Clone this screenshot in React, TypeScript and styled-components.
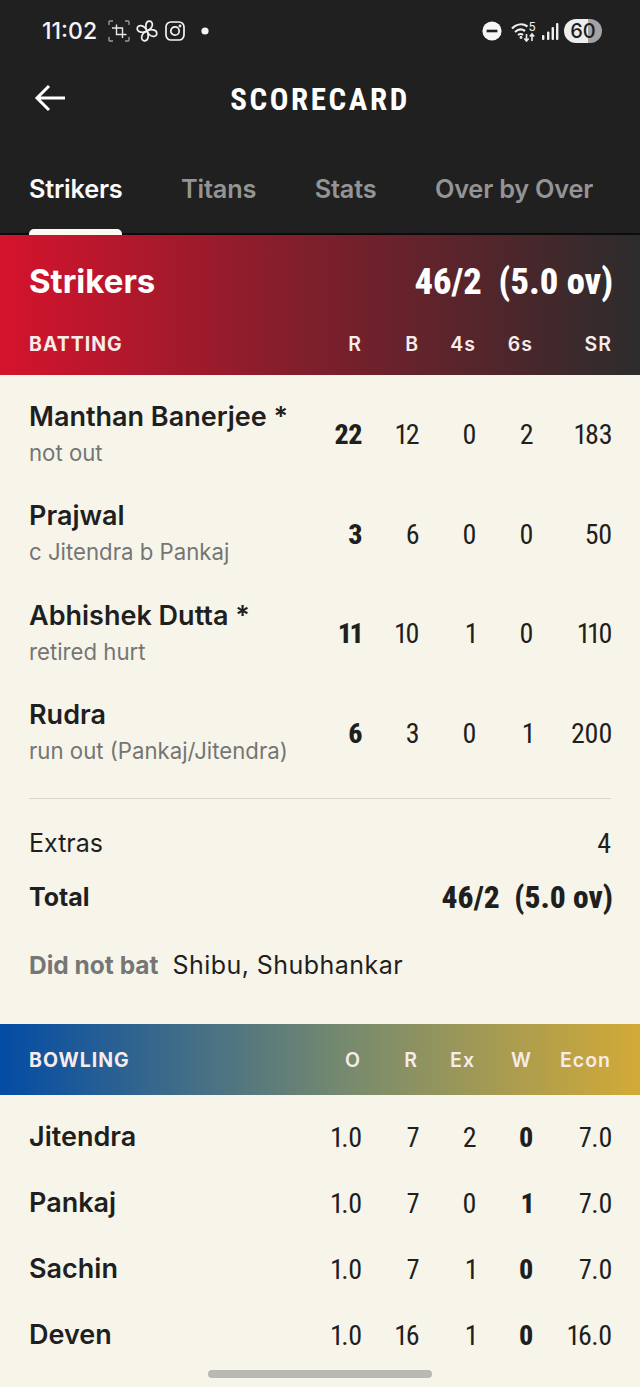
import React from "react";
import styled, { createGlobalStyle } from "styled-components";

const GlobalStyle = createGlobalStyle`
  html, body {
    margin: 0;
    padding: 0;
    background: #f7f5ea;
  }
  * { box-sizing: border-box; }
`;

const SANS = `Inter, Roboto, "Liberation Sans", sans-serif`;
const NARROW = `Roboto, "Liberation Sans", sans-serif`;

const batting = [
  { name: "Manthan Banerjee *", how: "not out", r: "22", b: "12", f: "0", s: "2", sr: "183" },
  { name: "Prajwal", how: "c Jitendra b Pankaj", r: "3", b: "6", f: "0", s: "0", sr: "50" },
  { name: "Abhishek Dutta *", how: "retired hurt", r: "11", b: "10", f: "1", s: "0", sr: "110" },
  { name: "Rudra", how: "run out (Pankaj/Jitendra)", r: "6", b: "3", f: "0", s: "1", sr: "200" },
];

const bowling = [
  { name: "Jitendra", o: "1.0", r: "7", ex: "2", w: "0", econ: "7.0" },
  { name: "Pankaj", o: "1.0", r: "7", ex: "0", w: "1", econ: "7.0" },
  { name: "Sachin", o: "1.0", r: "7", ex: "1", w: "0", econ: "7.0" },
  { name: "Deven", o: "1.0", r: "16", ex: "1", w: "0", econ: "16.0" },
];

const Page = styled.div`
  position: relative;
  width: 640px;
  height: 1387px;
  overflow: hidden;
  background: #f7f5ea;
  font-family: ${SANS};
  color: #1f1f1f;
`;

const Top = styled.div`
  background: #202020;
  height: 235px;
  border-bottom: 2px solid #0c0c0c;
  display: flex;
  flex-direction: column;
`;

const StatusBar = styled.div`
  height: 62px;
  padding: 0 38px 0 42px;
  display: flex;
  align-items: center;
  justify-content: space-between;
  color: #f4f4f4;
`;

const StatusGroup = styled.div`
  display: flex;
  align-items: center;
`;

const Clock = styled.span`
  font-size: 23px;
  font-weight: 500;
  margin-right: 10px;
`;

const Battery = styled.span`
  width: 38px;
  height: 24px;
  margin-left: 5px;
  border-radius: 12px;
  background: linear-gradient(90deg, #ededed 0 62%, #a3a3a3 62% 100%);
  color: #1c1c1c;
  font-size: 20px;
  font-weight: 500;
  display: flex;
  align-items: center;
  justify-content: center;
`;

const Header = styled.div`
  height: 72px;
  padding-left: 33px;
  display: flex;
  align-items: center;
`;

const Title = styled.h1`
  flex: 1;
  margin: 0 0 0 -67px;
  padding-top: 2px;
  text-align: center;
  color: #fff;
  font-family: ${NARROW};
  font-size: 31px;
  font-weight: 700;
  font-stretch: 75%;
  letter-spacing: 2.6px;
`;

const BackIcon = styled.svg`
  width: 34px;
  height: 34px;
  flex: none;
`;

const Tabs = styled.div`
  flex: 1;
  padding: 0 29px;
  display: flex;
  gap: 58.6px;
`;

const Tab = styled.div<{ $active?: boolean }>`
  position: relative;
  padding-top: 39px;
  font-size: 25.3px;
  font-weight: 600;
  letter-spacing: -0.2px;
  white-space: nowrap;
  color: ${(p) => (p.$active ? "#fbfbf8" : "#949494")};

  &::after {
    content: "";
    display: ${(p) => (p.$active ? "block" : "none")};
    position: absolute;
    left: 0;
    right: 0;
    bottom: -2px;
    height: 6px;
    border-radius: 5px 5px 0 0;
    background: #fbf9f2;
  }
`;

const TeamBand = styled.div`
  height: 140px;
  padding: 0 29px;
  background: linear-gradient(90deg, #d5132d 0%, #7c1f2b 50%, #2c2c2c 100%);
  color: #fff;
  display: flex;
  flex-direction: column;
`;

const TeamLine = styled.div`
  height: 92px;
  display: flex;
  justify-content: space-between;
  align-items: center;
`;

const TeamName = styled.div`
  font-size: 33px;
  font-weight: 700;
`;

const ScoreBig = styled.div`
  margin-right: -2px;
  font-family: ${NARROW};
  font-size: 36.5px;
  font-weight: 800;
  font-stretch: 75%;
  white-space: pre;
`;

const StatGrid = styled.div`
  display: grid;
  grid-template-columns: 1fr 56px 57px 57px 57px 79px;
  align-items: center;
`;

const BandLabels = styled(StatGrid)`
  margin-top: 5px;
`;

const LabelCell = styled.span`
  margin-right: -1px;
  font-size: 19.5px;
  font-weight: 600;
  letter-spacing: 1px;
  text-align: right;
  color: #f7ecea;

  &:first-child {
    text-align: left;
    font-weight: 700;
  }
`;

const Num = styled.span<{ $bold?: boolean }>`
  margin-right: -1px;
  font-family: ${NARROW};
  font-size: 28px;
  font-stretch: 75%;
  font-variant-numeric: proportional-nums;
  letter-spacing: -0.5px;
  font-weight: ${(p) => (p.$bold ? 800 : 400)};
  text-align: right;
`;

const BattingRow = styled(StatGrid)`
  height: 99.5px;

  ${Num} {
    margin-top: 4px;
  }
`;

const BattingList = styled.div`
  padding: 8px 29px 0;
`;

const PlayerName = styled.div`
  font-size: 27px;
  font-weight: 600;
  line-height: 34px;
  white-space: nowrap;
`;

const Dismissal = styled.div`
  margin-top: 6px;
  font-size: 22.2px;
  line-height: 26px;
  color: #757575;
  white-space: nowrap;
`;

const Summary = styled.div`
  margin: 17px 29px 0;
  border-top: 1px solid #d8d6cc;
  padding-top: 26px;
`;

const SummaryRow = styled.div<{ $total?: boolean }>`
  display: flex;
  justify-content: space-between;
  align-items: center;
  height: 36px;
  margin-bottom: ${(p) => (p.$total ? "35px" : "18px")};
  font-size: 25px;
  font-weight: ${(p) => (p.$total ? 700 : 400)};
`;

const SummaryValue = styled.span`
  font-family: ${NARROW};
  font-size: 28px;
  font-stretch: 75%;
`;

const SummaryTotal = styled(SummaryValue)`
  margin-right: -2px;
  font-size: 31.5px;
  font-weight: 800;
  white-space: pre;
`;

const DidNotBat = styled.div`
  display: flex;
  align-items: baseline;
  gap: 14px;
  font-size: 25px;
  letter-spacing: 0.45px;
`;

const DidNotBatLabel = styled.span`
  font-size: 24.5px;
  font-weight: 700;
  letter-spacing: 0;
  color: #767676;
`;

const BowlingBand = styled(StatGrid)`
  margin-top: 44px;
  height: 71px;
  padding: 0 30px 0 29px;
  background: linear-gradient(90deg, #034ca5 0%, #7a8c6c 56%, #d3aa37 100%);
`;

const BowlingRow = styled(StatGrid)`
  height: 66px;
  padding: 0 29px;
`;

const BowlingList = styled.div`
  padding-top: 9px;
`;

const HomeBar = styled.div`
  position: absolute;
  left: 208px;
  bottom: 9px;
  width: 224px;
  height: 8px;
  border-radius: 4px;
  background: #b9b8b2;
`;

const CropIcon = () => (
  <svg width="24" height="24" viewBox="0 0 24 24" fill="none" stroke="#e8e8e8" strokeWidth="1.4" style={{ marginRight: 5 }}>
    <path d="M2 6V3a1 1 0 0 1 1-1h3M18 2h3a1 1 0 0 1 1 1v3M22 18v3a1 1 0 0 1-1 1h-3M6 22H3a1 1 0 0 1-1-1v-3" stroke="#9a9a9a" />
    <path d="M9.5 5.5v10h10M5 9h10.5v10" />
  </svg>
);

const PinwheelIcon = () => (
  <svg width="22" height="22" viewBox="0 0 22 22" fill="none" stroke="#f2f2f2" strokeWidth="1.7" style={{ marginRight: 7 }}>
    {[0, 90, 180, 270].map((deg) => (
      <path key={deg} d="M11 11C9 7.5 9.2 1.5 13.2 1.2 17.5 1 18 8 11 11Z" transform={`rotate(${deg} 11 11)`} />
    ))}
  </svg>
);

const InstagramIcon = () => (
  <svg width="20" height="20" viewBox="0 0 20 20" fill="none" stroke="#f4f4f4" strokeWidth="1.7" style={{ marginRight: 16 }}>
    <rect x="1" y="1" width="18" height="18" rx="5" />
    <circle cx="10" cy="10" r="4.2" />
    <circle cx="15" cy="5" r="0.6" fill="#f4f4f4" />
  </svg>
);

const Dot = () => (
  <svg width="8" height="8" viewBox="0 0 8 8">
    <circle cx="4" cy="4" r="3.6" fill="#f4f4f4" />
  </svg>
);

const DndIcon = () => (
  <svg width="20" height="20" viewBox="0 0 20 20" style={{ marginRight: 9 }}>
    <circle cx="10" cy="10" r="9.6" fill="#f6f6f6" />
    <rect x="4.6" y="8.7" width="10.8" height="2.6" fill="#202020" />
  </svg>
);

const WifiIcon = () => (
  <svg width="25" height="22" viewBox="0 0 25 22" fill="none" stroke="#ededed" style={{ marginRight: 5 }}>
    <path d="M1 8.5C6 3.5 12 3.5 16.5 6.5" strokeWidth="2.2" />
    <path d="M4 12c3.5-3.2 7-3.2 10-1" strokeWidth="2.2" />
    <path d="M7 15c2-1.5 3.5-1.5 5 0" strokeWidth="2" />
    <circle cx="10" cy="17.5" r="1.4" fill="#ededed" stroke="none" />
    <path d="M15.5 14v7M13.3 18.4l2.2 2.6 2.2-2.6M21 21v-7M18.8 16.6l2.2-2.6 2.2 2.6" strokeWidth="1.6" />
    <text x="17.5" y="10.5" fontSize="12.5" fill="#ededed" stroke="none" fontFamily="Roboto, sans-serif">5</text>
  </svg>
);

const SignalIcon = () => (
  <svg width="18" height="18" viewBox="0 0 18 18" fill="#ededed">
    <rect x="1" y="13" width="2.4" height="5" rx="1" />
    <rect x="6" y="9.5" width="2.4" height="8.5" rx="1" />
    <rect x="10.6" y="5" width="2.4" height="13" rx="1" />
    <rect x="15" y="1" width="2.4" height="17" rx="1" />
  </svg>
);

const App = () => {
  return (
    <Page>
      <GlobalStyle />
      <Top>
        <StatusBar>
          <StatusGroup>
            <Clock>11:02</Clock>
            <CropIcon />
            <PinwheelIcon />
            <InstagramIcon />
            <Dot />
          </StatusGroup>
          <StatusGroup>
            <DndIcon />
            <WifiIcon />
            <SignalIcon />
            <Battery>60</Battery>
          </StatusGroup>
        </StatusBar>
        <Header>
          <BackIcon viewBox="0 0 34 34" fill="none" stroke="#fff" strokeWidth="3">
            <path d="M32 17H4M16 5 4 17l12 12" />
          </BackIcon>
          <Title>SCORECARD</Title>
        </Header>
        <Tabs>
          <Tab $active>Strikers</Tab>
          <Tab>Titans</Tab>
          <Tab>Stats</Tab>
          <Tab>Over by Over</Tab>
        </Tabs>
      </Top>

      <TeamBand>
        <TeamLine>
          <TeamName>Strikers</TeamName>
          <ScoreBig>46/2  (5.0 ov)</ScoreBig>
        </TeamLine>
        <BandLabels>
          <LabelCell>BATTING</LabelCell>
          <LabelCell>R</LabelCell>
          <LabelCell>B</LabelCell>
          <LabelCell>4s</LabelCell>
          <LabelCell>6s</LabelCell>
          <LabelCell>SR</LabelCell>
        </BandLabels>
      </TeamBand>

      <BattingList>
        {batting.map((p) => (
          <BattingRow key={p.name}>
            <div>
              <PlayerName>{p.name}</PlayerName>
              <Dismissal>{p.how}</Dismissal>
            </div>
            <Num $bold>{p.r}</Num>
            <Num>{p.b}</Num>
            <Num>{p.f}</Num>
            <Num>{p.s}</Num>
            <Num>{p.sr}</Num>
          </BattingRow>
        ))}
      </BattingList>

      <Summary>
        <SummaryRow>
          <span>Extras</span>
          <SummaryValue>4</SummaryValue>
        </SummaryRow>
        <SummaryRow $total>
          <span>Total</span>
          <SummaryTotal>46/2  (5.0 ov)</SummaryTotal>
        </SummaryRow>
        <DidNotBat>
          <DidNotBatLabel>Did not bat</DidNotBatLabel>
          <span>Shibu, Shubhankar</span>
        </DidNotBat>
      </Summary>

      <BowlingBand>
        <LabelCell>BOWLING</LabelCell>
        <LabelCell>O</LabelCell>
        <LabelCell>R</LabelCell>
        <LabelCell>Ex</LabelCell>
        <LabelCell>W</LabelCell>
        <LabelCell>Econ</LabelCell>
      </BowlingBand>

      <BowlingList>
        {bowling.map((p) => (
          <BowlingRow key={p.name}>
            <PlayerName>{p.name}</PlayerName>
            <Num>{p.o}</Num>
            <Num>{p.r}</Num>
            <Num>{p.ex}</Num>
            <Num $bold>{p.w}</Num>
            <Num>{p.econ}</Num>
          </BowlingRow>
        ))}
      </BowlingList>

      <HomeBar />
    </Page>
  );
};

export default App;
